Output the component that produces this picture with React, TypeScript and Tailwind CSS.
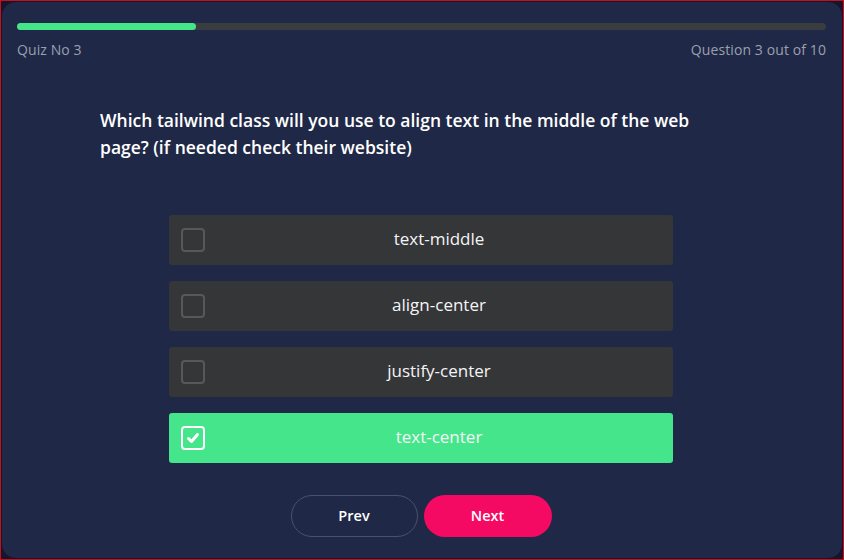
import React from "react";

const options = [
  { label: "text-middle", checked: false },
  { label: "align-center", checked: false },
  { label: "justify-center", checked: false },
  { label: "text-center", checked: true },
];

export default function App() {
  return (
    <div
      className="w-[844px] h-[560px] border border-[#c8101c] bg-[#15152e] p-px"
      style={{ fontFamily: "'Open Sans', 'Noto Sans', sans-serif" }}
    >
      <div className="h-full rounded-[14px] bg-[#1f2846] pl-[15px] pr-[16px] pt-[21px] flex flex-col">
        <div className="h-[7px] w-full rounded-full bg-[#3a3d3f]">
          <div className="h-full w-[179px] rounded-full bg-[#45e58a]" />
        </div>
        <div className="mt-[9px] flex justify-between text-[14px] text-[#9aa0b0] tracking-[0.1px]">
          <span>Quiz No 3</span>
          <span>Question 3 out of 10</span>
        </div>
        <div className="mt-[47px] pl-[83px] pr-[110px] text-[17.5px] leading-[27px] font-semibold text-white">
          Which tailwind class will you use to align text in the middle of the web page? (if needed check their website)
        </div>
        <div className="mt-[54px] flex flex-col gap-4 items-center pr-px">
          {options.map((o) => (
            <div
              key={o.label}
              className={`w-[504px] h-[50px] rounded-[3px] flex items-center pl-3 ${
                o.checked ? "bg-[#45e68b]" : "bg-[#343638]"
              }`}
            >
              <div
                className={`w-[24px] h-[24px] shrink-0 rounded-[4px] border-2 flex items-center justify-center ${
                  o.checked ? "border-white" : "border-[#56595c]"
                }`}
              >
                {o.checked && (
                  <svg width="14" height="14" viewBox="0 0 14 14" fill="none">
                    <path d="M2.5 7.5 L5.5 10.5 L11.5 3.5" stroke="white" strokeWidth="3" strokeLinecap="round" strokeLinejoin="round" />
                  </svg>
                )}
              </div>
              <div className="flex-1 text-center text-[17px] text-[#f4f4f6] pb-[3px]">
                {o.label}
              </div>
            </div>
          ))}
        </div>
        <div className="mt-8 flex justify-center gap-[6px] pr-[1px]">
          <button className="w-[127px] h-[42px] rounded-full border border-[#4a516a] text-white text-[14.5px] font-semibold">
            Prev
          </button>
          <button className="w-[128px] h-[42px] rounded-full bg-[#f50a63] text-white text-[14.5px] font-semibold">
            Next
          </button>
        </div>
      </div>
    </div>
  );
}
